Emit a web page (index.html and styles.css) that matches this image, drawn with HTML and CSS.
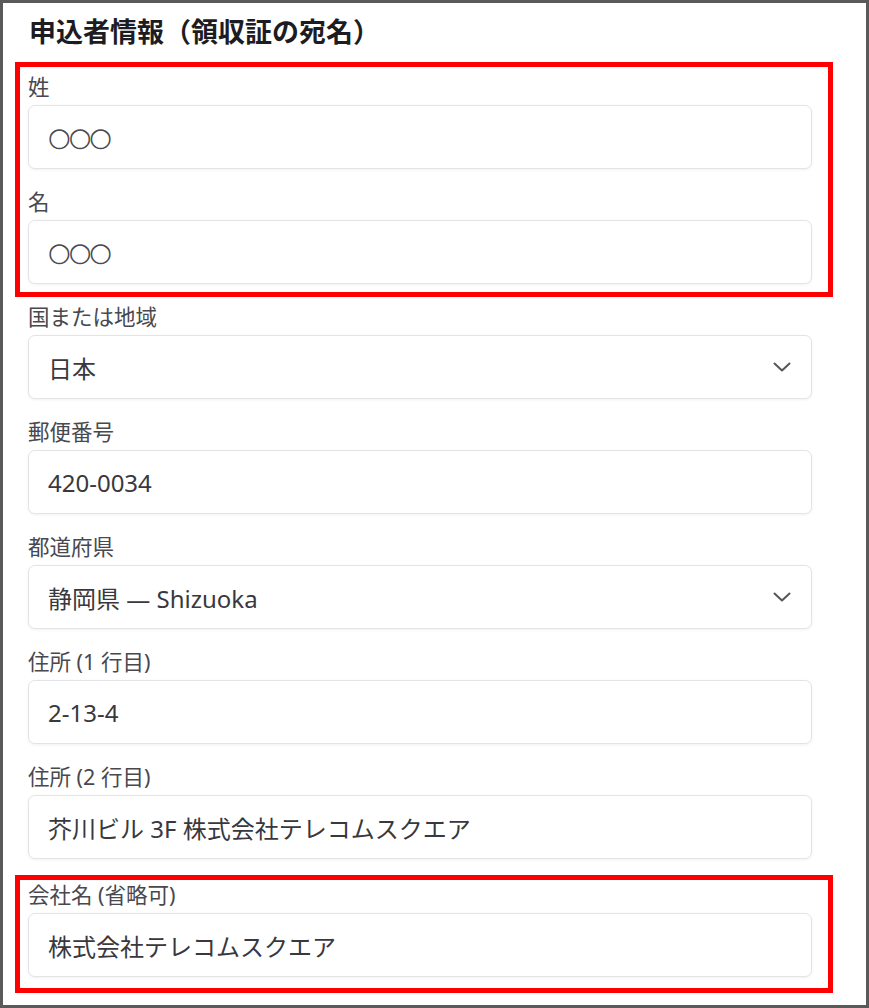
FILE: index.html
```html
<!DOCTYPE html>
<html lang="ja">

<head>
    <meta charset="UTF-8">
    <meta name="viewport" content="width=device-width, initial-scale=1.0">
    <title>申込者情報</title>
    <link rel="stylesheet" href="styles.css">
</head>

<body>

    <div class="frame">
        <h2 class="title">申込者情報（領収証の宛名）</h2>

        <div class="form">
            <div class="mark mark-name">
                <div class="field">
                    <div class="label">姓</div>
                    <div class="input"><span class="dummy">○○○</span></div>
                </div>
                <div class="field">
                    <div class="label">名</div>
                    <div class="input"><span class="dummy">○○○</span></div>
                </div>
            </div>

            <div class="field">
                <div class="label">国または地域</div>
                <div class="input select">
                    <span>日本</span>
                    <svg class="chevron" width="18" height="10" viewBox="0 0 18 10">
                        <polyline points="1.5,1.5 9,8.5 16.5,1.5" fill="none" stroke="#55555c" stroke-width="2" stroke-linecap="round" stroke-linejoin="round" />
                    </svg>
                </div>
            </div>

            <div class="field">
                <div class="label">郵便番号</div>
                <div class="input">420-0034</div>
            </div>

            <div class="field">
                <div class="label">都道府県</div>
                <div class="input select">
                    <span>静岡県 — Shizuoka</span>
                    <svg class="chevron" width="18" height="10" viewBox="0 0 18 10">
                        <polyline points="1.5,1.5 9,8.5 16.5,1.5" fill="none" stroke="#55555c" stroke-width="2" stroke-linecap="round" stroke-linejoin="round" />
                    </svg>
                </div>
            </div>

            <div class="field">
                <div class="label">住所 (1 行目)</div>
                <div class="input">2-13-4</div>
            </div>

            <div class="field">
                <div class="label">住所 (2 行目)</div>
                <div class="input">芥川ビル 3F 株式会社テレコムスクエア</div>
            </div>

            <div class="mark mark-company">
                <div class="field">
                    <div class="label">会社名 (省略可)</div>
                    <div class="input">株式会社テレコムスクエア</div>
                </div>
            </div>
        </div>
    </div>

</body>

</html>
```

FILE: styles.css
```css
* {
    padding: 0px;
    margin: 0px;
    box-sizing: border-box;
}

body {
    font-family: "Noto Sans", "Noto Sans CJK JP", sans-serif;
    background-color: #fff;
}

.frame {
    height: 100vh;
    border: 3px solid #5a5a5a;
    padding: 11px 54px 0 25px;
    background-color: #fff;
}

.title {
    font-size: 27px;
    line-height: 36px;
    font-weight: 700;
    color: #1c1c22;
    margin-bottom: 12px;
    padding-left: 1px;
}

.form {
    display: flex;
    flex-direction: column;
    gap: 21px;
}

/* 赤枠（注記） */
.mark {
    display: flex;
    flex-direction: column;
    gap: 21px;
    border: 5px solid #ff0000;
}

.mark-name {
    margin: 0 -21px -13px -13px;
    padding: 8px 16px 8px 8px;
}

.mark-company {
    margin: -5px -21px 0 -13px;
    padding: 3px 16px 11px 8px;
}

.label {
    font-size: 21.5px;
    line-height: 24px;
    color: #48484e;
    margin-bottom: 6px;
}

.input {
    height: 64px;
    display: flex;
    align-items: center;
    padding: 0 19px;
    border: 1px solid #e4e4e7;
    border-radius: 7px;
    background-color: #fff;
    box-shadow: 0 1px 3px rgba(0, 0, 0, 0.06);
    font-size: 24px;
    color: #38383e;
    white-space: nowrap;
}

.dummy {
    font-family: "DejaVu Sans", sans-serif;
    font-size: 26px;
    letter-spacing: -2px;
    color: #4a4a50;
}

.select {
    justify-content: space-between;
    padding-right: 20px;
}

.chevron {
    flex-shrink: 0;
}
```
